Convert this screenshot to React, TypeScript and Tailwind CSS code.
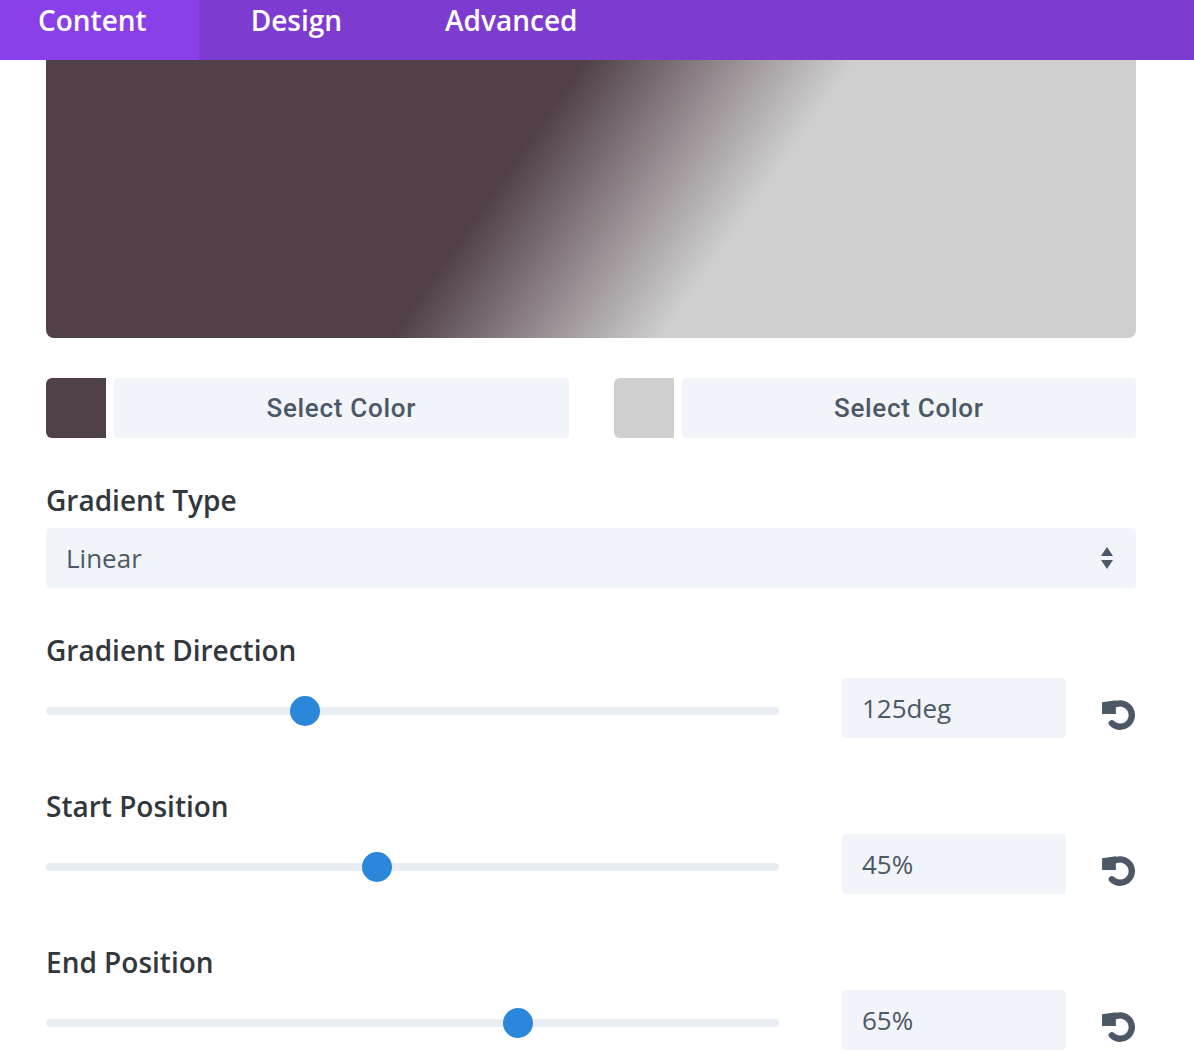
import React from 'react';

const font = { fontFamily: '"Open Sans", "Liberation Sans", sans-serif' };

function ResetIcon() {
  return (
    <svg width="34" height="34" viewBox="0 0 32 32" className="text-[#4c5866]">
      <path
        d="M14.2 6.7 A11 11 0 1 1 10.2 24.8"
        fill="none"
        stroke="currentColor"
        strokeWidth="6"
        strokeLinecap="round"
      />
      <polygon points="1,5 1,16 14,16 14,3" fill="currentColor" />
    </svg>
  );
}

function SliderRow({ label, value, pct, first }: { label: string; value: string; pct: number; first?: boolean }) {
  return (
    <div className={first ? 'mt-[44px]' : 'mt-[50px]'}>
      <div className="h-[36px] text-[28px] font-semibold leading-[36px] text-[#32373c]">{label}</div>
      <div className="mt-[10px] flex h-[60px] items-center">
        <div className="relative mt-[6px] h-[8px] w-[733px] rounded-full bg-[#e8edf4]">
          <div
            className="absolute top-1/2 h-[30px] w-[30px] -translate-x-1/2 -translate-y-1/2 rounded-full bg-[#2b87da]"
            style={{ left: 15 + pct * (733 - 30) }}
          />
        </div>
        <div className="ml-[63px] flex h-[60px] w-[224px] items-center rounded-[4px] bg-[#f1f4f9] pl-[20px] text-[26px] text-[#4c5866]">
          {value}
        </div>
        <div className="ml-auto mr-[1px] mt-[12px]">
          <ResetIcon />
        </div>
      </div>
    </div>
  );
}

function ColorPicker({ color }: { color: string }) {
  return (
    <div className="flex h-[60px] gap-[8px]">
      <div className="h-[60px] w-[60px] rounded-l-[6px]" style={{ backgroundColor: color }} />
      <div
        className="flex flex-1 items-center justify-center rounded-[4px] bg-[#f1f4f9] text-[26px] font-medium tracking-[0.7px] text-[#4c5866]"
        style={{ fontFamily: 'Roboto, "Liberation Sans", sans-serif' }}
      >
        Select Color
      </div>
    </div>
  );
}

export default function App() {
  return (
    <div className="min-h-[1064px] w-[1194px] overflow-hidden bg-white" style={font}>
      {/* Tabs */}
      <div className="flex h-[60px] bg-[#7d3bd0] text-[28px] font-semibold leading-[40px] text-white">
        <div className="-ml-[15px] flex">
          <div className="bg-[#8a40e8] pl-[53px] pr-[52px]">Content</div>
          <div className="pl-[52px] pr-[51px]">Design</div>
          <div className="pl-[52px] pr-[52px]">Advanced</div>
        </div>
      </div>

      <div className="pl-[46px] pr-[58px]">
        {/* Preview */}
        <div
          className="h-[278px] rounded-b-[8px]"
          style={{ background: 'linear-gradient(125deg, #514049 42%, #cfcfcf 63%)' }}
        />

        {/* Color pickers */}
        <div className="mt-[40px] grid grid-cols-2 gap-[45px]">
          <ColorPicker color="#4f404a" />
          <ColorPicker color="#cfcfcf" />
        </div>

        {/* Gradient type */}
        <div className="mt-[44px] h-[36px] text-[28px] font-semibold leading-[36px] text-[#32373c]">Gradient Type</div>
        <div className="mt-[10px] flex h-[60px] items-center justify-between rounded-[4px] bg-[#f1f4f9] pl-[20px] pr-[22px] text-[26px] text-[#4c5866]">
          <span>Linear</span>
          <svg width="14" height="26" viewBox="0 0 14 26" className="text-[#4c5866]">
            <polygon points="7,2 13,11 1,11" fill="currentColor" />
            <polygon points="1,15 13,15 7,24" fill="currentColor" />
          </svg>
        </div>

        <SliderRow label="Gradient Direction" value="125deg" pct={125 / 360} first />
        <SliderRow label="Start Position" value="45%" pct={0.45} />
        <SliderRow label="End Position" value="65%" pct={0.65} />
      </div>
    </div>
  );
}
